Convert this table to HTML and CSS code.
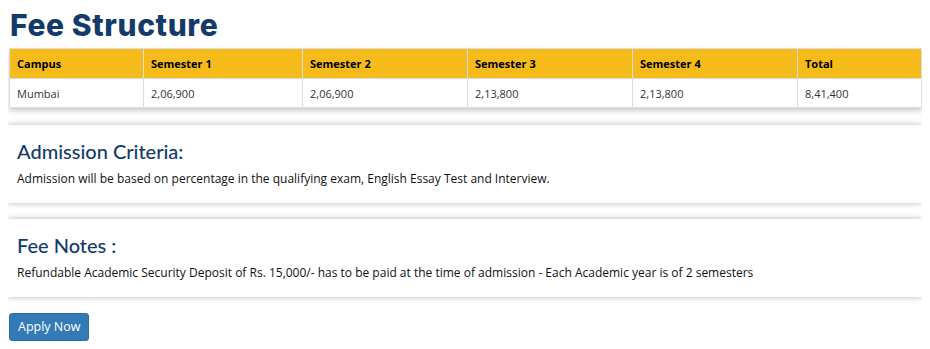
FILE: index.html
```html
<!DOCTYPE html>
<html>
  <head>
    <title>Fee Structure</title>
    <link rel="stylesheet" href="styles.css">
  </head>
  <body>
    <h1 class="page-title">Fee Structure</h1>

    <table class="fee-table">
      <thead>
        <tr>
          <th class="col-campus">Campus</th>
          <th class="col-sem1">Semester 1</th>
          <th class="col-sem">Semester 2</th>
          <th class="col-sem">Semester 3</th>
          <th class="col-sem">Semester 4</th>
          <th>Total</th>
        </tr>
      </thead>
      <tbody>
        <tr>
          <td>Mumbai</td>
          <td>2,06,900</td>
          <td>2,06,900</td>
          <td>2,13,800</td>
          <td>2,13,800</td>
          <td>8,41,400</td>
        </tr>
      </tbody>
    </table>

    <div class="info-box">
      <h3>Admission Criteria:</h3>
      <p>Admission will be based on percentage in the qualifying exam, English Essay Test and Interview.</p>
    </div>

    <div class="info-box">
      <h3>Fee Notes :</h3>
      <p>Refundable Academic Security Deposit of Rs. 15,000/- has to be paid at the time of admission - Each Academic year is of 2 semesters</p>
    </div>

    <a class="btn-apply" href="#">Apply Now</a>
  </body>
</html>
```

FILE: styles.css
```css
body {
  margin: 8px;
  font-family: "Open Sans", Arial, sans-serif;
  color: #222;
  background-color: #fff;
}
.page-title {
  margin: 0 0 6px 2px;
  font-family: Inter, sans-serif;
  font-weight: 800;
  font-size: 30px;
  line-height: 34px;
  letter-spacing: 0.6px;
  color: #133b69;
}
.fee-table {
  width: 913px;
  margin-left: 1px;
  border-collapse: collapse;
  font-size: 11px;
  box-shadow: 0 3px 5px rgba(0, 0, 0, 0.2);
}
.fee-table th,
.fee-table td {
  border: 1px solid #ddd;
  padding: 0 7px;
  text-align: left;
}
.fee-table th {
  height: 29px;
  background-color: #f5bb1a;
  font-weight: 700;
  color: #000;
}
.fee-table td {
  height: 28px;
  color: #333;
}
.col-campus {
  width: 119px;
}
.col-sem1 {
  width: 144px;
}
.col-sem {
  width: 150px;
}
.info-box {
  margin-top: 17px;
  padding: 14px 9px 16px;
  background-color: #fff;
  box-shadow: 0 0 6px rgba(0, 0, 0, 0.3);
}
.info-box + .info-box {
  margin-top: 16px;
}
.info-box h3 {
  margin: 0 0 8px;
  font-family: Lato, sans-serif;
  font-weight: 500;
  font-size: 20px;
  line-height: 24px;
  color: #133b69;
}
.info-box p {
  margin: 0;
  font-size: 12px;
  line-height: 16px;
  color: #111;
}
.btn-apply {
  display: inline-block;
  margin: 16px 0 0 1px;
  padding: 6px 8px;
  background-color: #337ab7;
  border: 1px solid #2e6da4;
  border-radius: 3px;
  color: #fff;
  font-family: "Open Sans", sans-serif;
  font-size: 12.5px;
  line-height: 14px;
  text-decoration: none;
}
```
